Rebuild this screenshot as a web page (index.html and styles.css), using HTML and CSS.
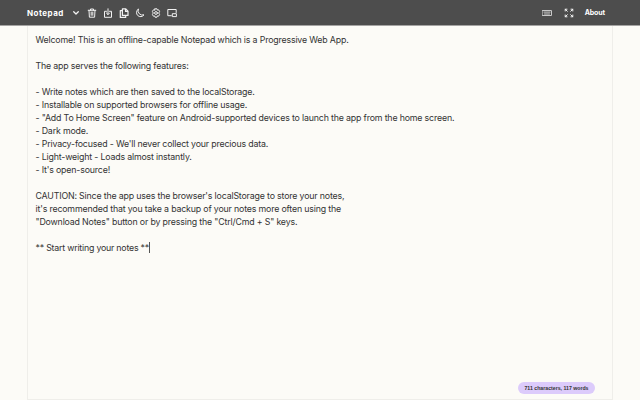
FILE: index.html
```
<!DOCTYPE html>
<html lang="en"><head><meta charset="utf-8"><title>Notepad</title><link rel="stylesheet" href="styles.css"></head>
<body>
<header class="bar">
<strong class="brand">Notepad</strong>
<nav class="tools">
<svg class="icon chevron" viewBox="0 0 10 10"><path d="M2.7 3.8 5 6 7.3 3.8"/></svg>
<svg class="icon" viewBox="0 0 10 10"><path d="M1.2 2.3h7.6M3.5 2.3V1h3v1.3M2 2.3l.4 6.9h5.2L8 2.3M4.2 4v3.3M5.8 4v3.3"/></svg>
<svg class="icon" viewBox="0 0 10 10"><path d="M3.5 3.3h-2v6h7v-6h-2M5 .8v5.7M3.4 5 5 6.6 6.6 5"/></svg>
<svg class="icon copy" viewBox="0 0 10 10"><path d="M3.4.9h3.4L9 3.1v4.3H3.4zM6.5 1v2.4H9M3.2 2.6H1.3v6.8h5.4V7.6"/></svg>
<svg class="icon" viewBox="0 0 10 10"><path d="M3.2 1.2A4.1 4.1 0 1 0 9 6.8 4.5 4.5 0 0 1 3.2 1.2z"/></svg>
<svg class="icon" viewBox="0 0 10 10"><path d="M4 .8h2l.4 1.3 1.2-.3 1 1.7-.9 1.5.9 1.5-1 1.7-1.2-.3L6 9.2H4l-.4-1.3-1.2.3-1-1.7.9-1.5-.9-1.5 1-1.7 1.2.3z"/><circle cx="5" cy="5" r="1.4"/></svg>
<svg class="icon" viewBox="0 0 10 10"><path d="M4.3 7.7H.8V1.5h8.4v3M5.7 5.7h3.7v2.9H5.7z"/></svg>
</nav>
<nav class="links">
<svg class="icon keyboard" viewBox="0 0 10 10"><path d="M.5 2.5h9v5h-9zM2 4.1h6M2.5 6h5"/></svg>
<svg class="icon" viewBox="0 0 10 10"><path d="M1.2 3V1.2H3M7 1.2h1.8V3M8.8 7v1.8H7M3 8.8H1.2V7M1.2 1.2l2.1 2.1M8.8 1.2 6.7 3.3M8.8 8.8 6.7 6.7M1.2 8.8l2.1-2.1"/></svg>
<span class="about">About</span>
</nav>
</header>
<main class="note"><div class="text">Welcome! This is an offline-capable Notepad which is a Progressive Web App.

The app serves the following features:

- Write notes which are then saved to the localStorage.
- Installable on supported browsers for offline usage.
- "Add To Home Screen" feature on Android-supported devices to launch the app from the home screen.
- Dark mode.
- Privacy-focused - We'll never collect your precious data.
- Light-weight - Loads almost instantly.
- It's open-source!

CAUTION: Since the app uses the browser's localStorage to store your notes,
it's recommended that you take a backup of your notes more often using the
"Download Notes" button or by pressing the "Ctrl/Cmd + S" keys.

<span class="last">** Start writing your notes **</span><span class="caret"></span></div>
<div class="count">711 characters, 117 words</div></main>
</body></html>
```
FILE: styles.css
```
* { box-sizing: border-box; }
body { margin: 0; height: 400px; overflow: hidden; display: flex; flex-direction: column; background: #fcfbf7; font-family: Inter, sans-serif; }
.bar { height: 26px; flex: none; display: flex; align-items: center; justify-content: space-between; padding: 0 35px 0 27px; background: #4d4d4d; border-bottom: 1px solid #a5a4a3; color: #fff; }
.brand { font: 700 8px Inter, sans-serif; letter-spacing: .48px; width: 44px; }
.tools { display: flex; gap: 6px; flex: 1; }
.links { display: flex; align-items: center; gap: 12px; }
.icon { width: 10px; height: 10px; fill: none; stroke: #f2f2f2; stroke-width: 1; stroke-linecap: round; stroke-linejoin: round; }
.chevron { stroke-width: 1.3; }
.copy { stroke-width: 1.2; }
.keyboard { stroke: #c9c9c9; }
.about { font: 700 7px Inter, sans-serif; letter-spacing: -.1px; margin-left: -1px; }
.note { flex: 1; margin: 0 27px; border: 1px solid #efeeea; border-top: 0; padding: 7px 8px 8px 7.5px; display: flex; flex-direction: column; justify-content: space-between; }
.text { font-size: 8.8px; line-height: 13px; letter-spacing: -.165px; white-space: pre; color: #333; }
.last { letter-spacing: -.21px; }
.caret { display: inline-block; width: 1px; height: 11px; margin-right: -1px; background: #555; vertical-align: -2px; }
.count { align-self: flex-end; margin: 0 9px -3px 0; width: 77px; height: 12px; border-radius: 6px; background: #dccbfb; color: #333; text-align: center; font: 700 5.2px/12px "Liberation Sans", sans-serif; }
```
